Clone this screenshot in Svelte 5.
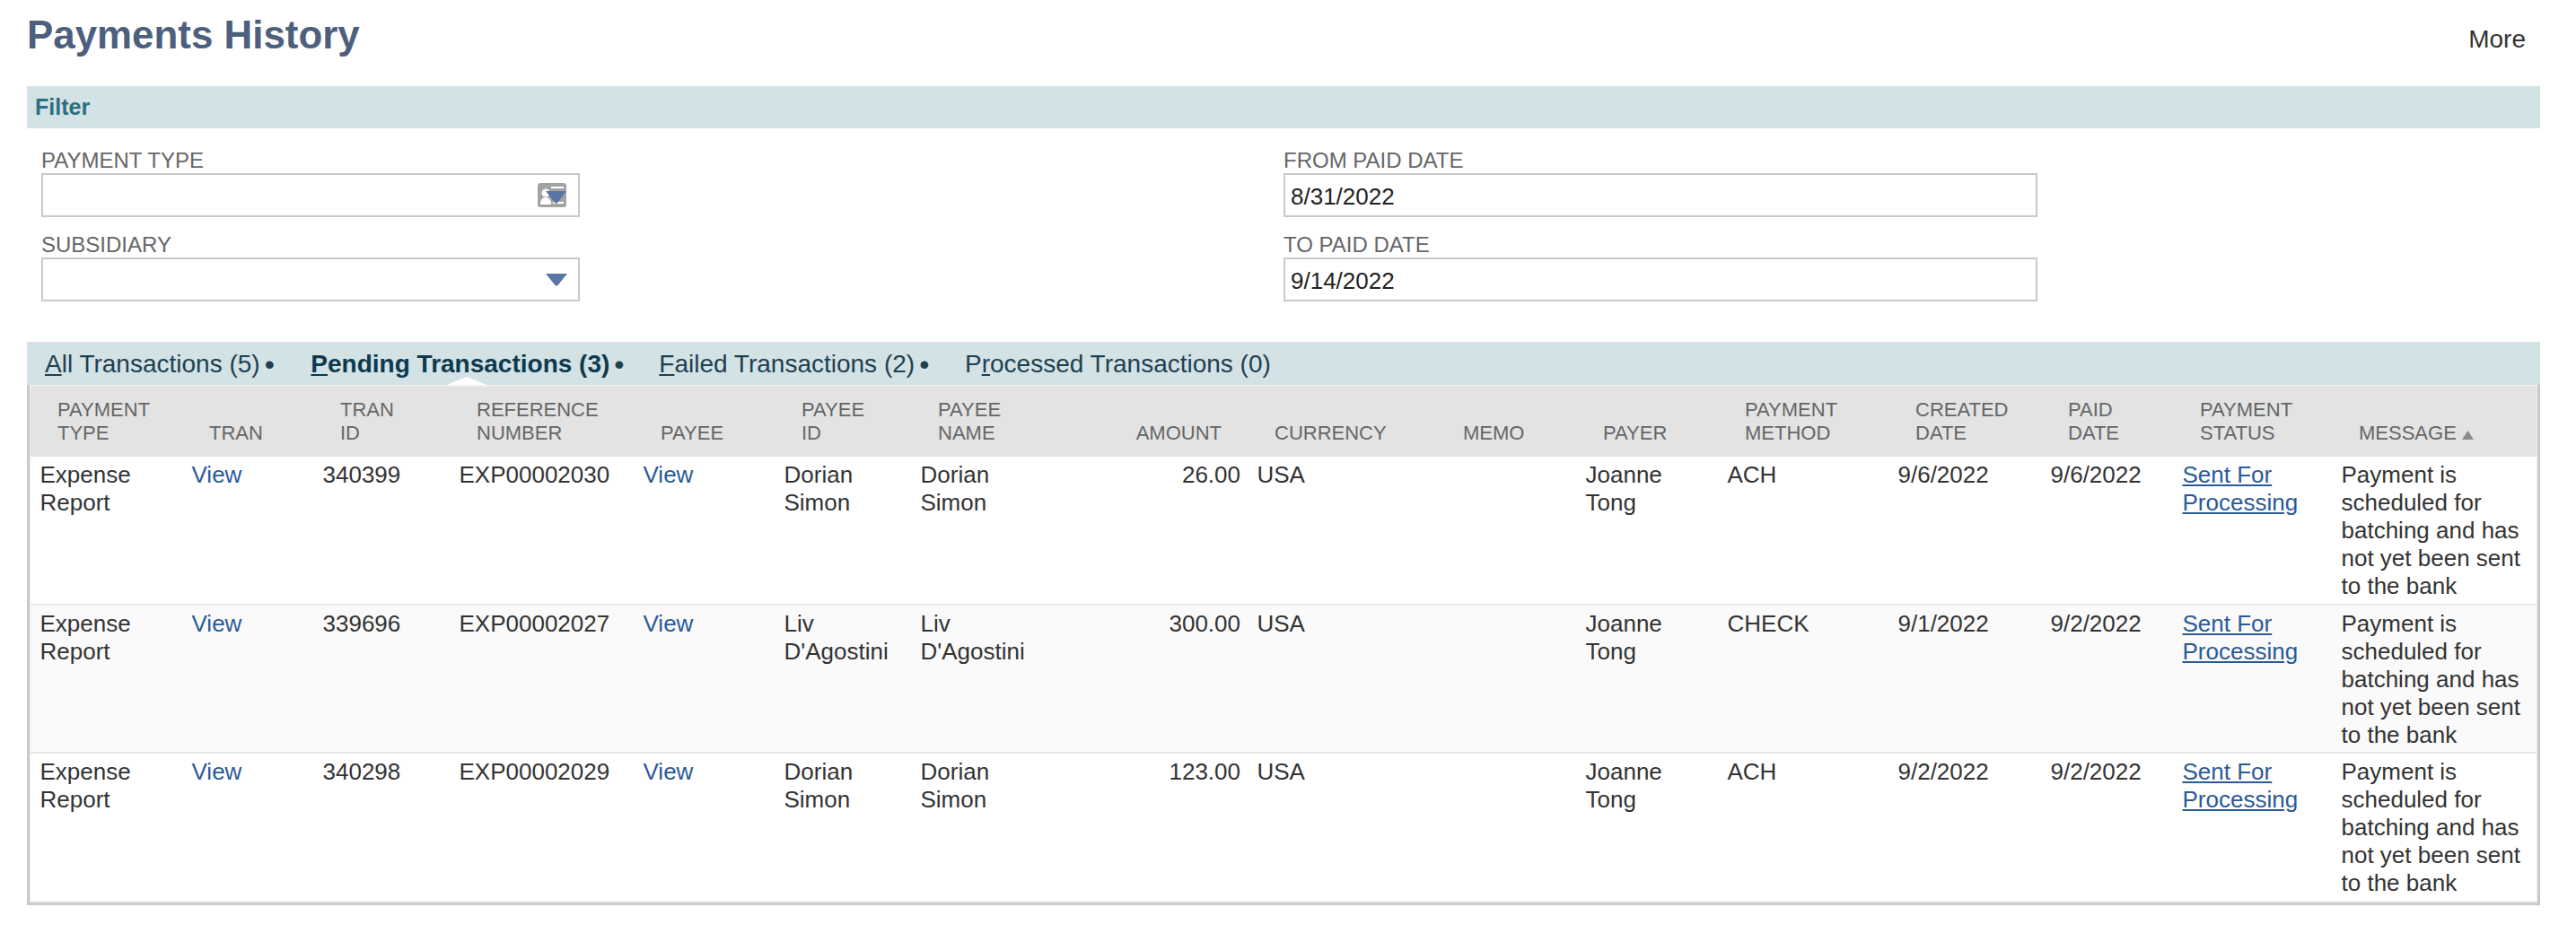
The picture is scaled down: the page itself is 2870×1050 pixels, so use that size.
<script>
  const columns = [
    { key: 'type', top: 'PAYMENT', label: 'TYPE', width: 169 },
    { key: 'tran', label: 'TRAN', width: 146 },
    { key: 'tranId', top: 'TRAN', label: 'ID', width: 152 },
    { key: 'ref', top: 'REFERENCE', label: 'NUMBER', width: 205 },
    { key: 'payee', label: 'PAYEE', width: 157 },
    { key: 'payeeId', top: 'PAYEE', label: 'ID', width: 152 },
    { key: 'payeeName', top: 'PAYEE', label: 'NAME', width: 225 },
    { key: 'amount', label: 'AMOUNT', width: 150, right: true },
    { key: 'currency', label: 'CURRENCY', width: 210 },
    { key: 'memo', label: 'MEMO', width: 156 },
    { key: 'payer', label: 'PAYER', width: 158 },
    { key: 'method', top: 'PAYMENT', label: 'METHOD', width: 190 },
    { key: 'created', top: 'CREATED', label: 'DATE', width: 170 },
    { key: 'paid', top: 'PAID', label: 'DATE', width: 147 },
    { key: 'status', top: 'PAYMENT', label: 'STATUS', width: 177 },
    { key: 'message', label: 'MESSAGE', width: 228, sorted: true }
  ];

  const message = 'Payment is scheduled for batching and has not yet been sent to the bank';

  const rows = [
    { tranId: '340399', ref: 'EXP00002030', payeeId: ['Dorian', 'Simon'], payeeName: ['Dorian', 'Simon'], amount: '26.00', method: 'ACH', created: '9/6/2022', paid: '9/6/2022' },
    { tranId: '339696', ref: 'EXP00002027', payeeId: ['Liv', "D'Agostini"], payeeName: ['Liv', "D'Agostini"], amount: '300.00', method: 'CHECK', created: '9/1/2022', paid: '9/2/2022' },
    { tranId: '340298', ref: 'EXP00002029', payeeId: ['Dorian', 'Simon'], payeeName: ['Dorian', 'Simon'], amount: '123.00', method: 'ACH', created: '9/2/2022', paid: '9/2/2022' }
  ];
</script>

<div class="page">
  <div class="title-row">
    <h1>Payments History</h1>
    <span class="more">More</span>
  </div>

  <div class="section-bar">Filter</div>

  <div class="filters">
    <div class="filter-col left">
      <label class="field">
        <span>PAYMENT TYPE</span>
        <div class="box">
          <svg class="picker" width="33" height="28" viewBox="0 0 33 28">
            <rect x="0" y="0" width="32" height="27" rx="3" fill="#a3a3a3" />
            <circle cx="9" cy="11" r="4.5" fill="#fff" />
            <path d="M3 24 Q3 16 9 16 Q15 16 15 24 Z" fill="#fff" />
            <rect x="15" y="4" width="14" height="2" fill="#fff" />
            <rect x="17" y="21" width="12" height="2" fill="#fff" />
            <path class="arrow" d="M9 9 H32 L22 22 Q20.500 23.500 19 22 Z" />
          </svg>
        </div>
      </label>
      <label class="field">
        <span>SUBSIDIARY</span>
        <div class="box">
          <svg class="caret" width="24" height="14" viewBox="0 0 24 14">
            <path class="arrow" d="M0 0 H24 L13.500 13 Q12 14 10.500 13 Z" />
          </svg>
        </div>
      </label>
    </div>
    <div class="filter-col right">
      <label class="field">
        <span>FROM PAID DATE</span>
        <div class="box">8/31/2022</div>
      </label>
      <label class="field">
        <span>TO PAID DATE</span>
        <div class="box">9/14/2022</div>
      </label>
    </div>
  </div>

  <div class="tabs">
    <span class="tab all"><u>A</u>ll Transactions (5)</span><i>•</i>
    <span class="tab pending"><u>P</u>ending Transactions (3)</span><i>•</i>
    <span class="tab failed"><u>F</u>ailed Transactions (2)</span><i>•</i>
    <span class="tab processed">P<u>r</u>ocessed Transactions (0)</span>
    <b class="notch"></b>
  </div>

  <div class="table-wrap">
    <table>
      <colgroup>
        {#each columns as col}
          <col style="width: {col.width}px" />
        {/each}
      </colgroup>
      <thead>
        <tr>
          {#each columns as col}
            <th class:right={col.right}>
              {#if col.top}{col.top}<br />{/if}{col.label}{#if col.sorted}<svg class="sort" width="13" height="10" viewBox="0 0 13 10"><path d="M6.500 0 L13 10 H0 Z" fill="#8a8a8a" /></svg>{/if}
            </th>
          {/each}
        </tr>
      </thead>
      <tbody>
        {#each rows as row}
          <tr>
            <td>Expense<br />Report</td>
            <td><a href="#view">View</a></td>
            <td>{row.tranId}</td>
            <td>{row.ref}</td>
            <td><a href="#view">View</a></td>
            <td>{row.payeeId[0]}<br />{row.payeeId[1]}</td>
            <td>{row.payeeName[0]}<br />{row.payeeName[1]}</td>
            <td class="right">{row.amount}</td>
            <td>USA</td>
            <td></td>
            <td>Joanne<br />Tong</td>
            <td>{row.method}</td>
            <td>{row.created}</td>
            <td>{row.paid}</td>
            <td><a class="status" href="#status">Sent For<br />Processing</a></td>
            <td>{message}</td>
          </tr>
        {/each}
      </tbody>
    </table>
  </div>
</div>

<style>
  :global(body) {
    margin: 0;
    background: #fff;
    font-family: "Liberation Sans", Arial, sans-serif;
    color: #333;
  }

  .page {
    width: 2800px;
    padding: 0 40px 0 30px;
  }

  .title-row {
    display: flex;
    justify-content: space-between;
    height: 96px;
  }
  h1 {
    margin: 0;
    padding: 14px 0 0 0;
    font-size: 43.900px;
    line-height: 50px;
    font-weight: bold;
    color: #4d5f7e;
  }
  .more {
    padding: 28px 16px 0 0;
    font-size: 28px;
    line-height: 31px;
  }

  .section-bar {
    height: 47px;
    padding-left: 9px;
    background: #d3e2e5;
    color: #2a6f80;
    font-size: 25px;
    font-weight: bold;
    line-height: 46px;
  }

  .filters {
    display: flex;
    box-sizing: border-box;
    height: 238px;
    padding: 20px 0 0 16px;
  }
  .filter-col.left {
    width: 600px;
    margin-right: 784px;
  }
  .filter-col.right {
    width: 840px;
  }
  .field {
    display: block;
    margin-bottom: 15px;
  }
  .field span {
    display: block;
    height: 30px;
    color: #666;
    font-size: 24px;
    line-height: 32px;
  }
  .box {
    display: flex;
    align-items: center;
    box-sizing: border-box;
    height: 49px;
    padding: 3px 6px 0;
    border: 2px solid #c9c9c9;
    color: #222;
    font-size: 26px;
  }
  .left .box {
    justify-content: flex-end;
    padding: 0 12px 0 0;
  }
  .arrow {
    fill: #5a75a3;
  }

  .tabs {
    position: relative;
    display: flex;
    align-items: center;
    box-sizing: border-box;
    height: 48px;
    padding: 2px 0 0 20px;
    background: #d3e2e5;
    color: #1f4050;
    font-size: 28px;
    white-space: nowrap;
  }
  .tabs i {
    margin-left: 5px;
    font-size: 32px;
    font-style: normal;
  }
  .tab.pending {
    margin-left: 40.500px;
    font-weight: bold;
    color: #0d3a4e;
  }
  .tab.failed {
    margin-left: 38.800px;
  }
  .tab.processed {
    margin-left: 39.700px;
  }
  .notch {
    position: absolute;
    left: 468px;
    bottom: 0;
    width: 44px;
    height: 9px;
    background: #fff;
    clip-path: polygon(0 100%, 50% 0, 100% 100%);
  }

  .table-wrap {
    box-sizing: border-box;
    padding: 2px 1px;
    border-left: 3px solid #c9c9c9;
    border-right: 3px solid #c9c9c9;
    border-bottom: 3px solid #c9c9c9;
    background: #eee;
  }
  table {
    width: 2792px;
    table-layout: fixed;
    border-collapse: collapse;
    background: #fff;
  }
  th {
    height: 78px;
    box-sizing: border-box;
    padding: 0 28px 13px 30px;
    background: #e3e3e3;
    color: #666;
    font-size: 22px;
    font-weight: normal;
    line-height: 26px;
    text-align: left;
    vertical-align: bottom;
    white-space: nowrap;
  }
  th.right {
    padding: 0 29px 13px 0;
    text-align: right;
  }
  .sort {
    margin-left: 6px;
  }
  td {
    height: 165px;
    box-sizing: border-box;
    padding: 5px 10px 0 10.500px;
    border-bottom: 2px solid #e8e8e8;
    font-size: 26px;
    line-height: 31px;
    vertical-align: top;
  }
  td.right {
    padding-right: 8px;
    text-align: right;
  }
  tbody tr:nth-child(2) td {
    background: #fafafa;
  }
  tbody tr:last-child td {
    border-bottom: 0;
  }
  a {
    color: #2a5a98;
    text-decoration: none;
  }
  a.status {
    text-decoration: underline;
  }
</style>
